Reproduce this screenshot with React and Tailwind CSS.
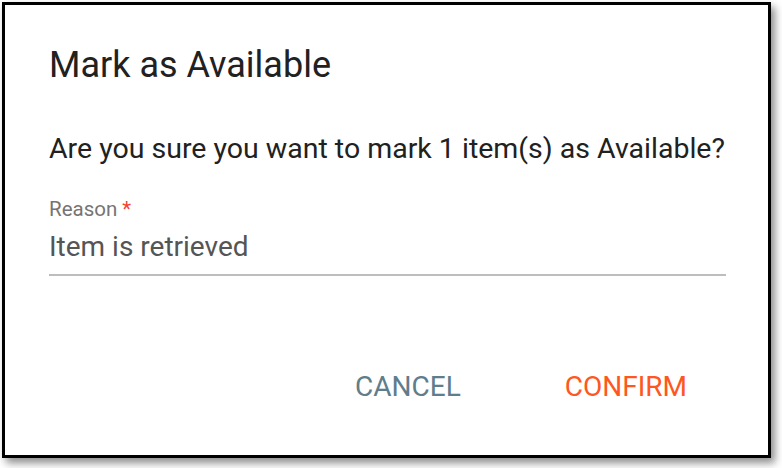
import React from 'react';

export default function App() {
  return (
    <div className="w-[782px] h-[468px] bg-white pl-[2px] pt-[2px] font-['Roboto',sans-serif]">
      <div className="w-[769px] h-[456px] border-[3px] border-black bg-white shadow-[4px_5px_8px_rgba(0,0,0,0.45)] flex flex-col px-[44px]">
        <h1 className="mt-[36px] text-[36px] leading-[48px] text-[#212121] font-normal">Mark as Available</h1>
        <p className="mt-[42px] whitespace-nowrap text-[28.5px] leading-[36px] text-[#212121]">
          Are you sure you want to mark 1 item(s) as Available?
        </p>
        <div className="mt-[30px] flex flex-col w-[677px]">
          <label className="text-[20.5px] leading-[24px] text-[#757575]">
            Reason <span className="text-[#f44336]">*</span>
          </label>
          <div className="mt-[9px] text-[28px] leading-[34px] text-[#555555] pb-[10px] border-b-2 border-[#bdbdbd]">
            Item is retrieved
          </div>
        </div>
        <div className="mt-auto mb-[50px] flex justify-end pr-[13px]">
          <button className="px-[24px] text-[28px] leading-[36px] uppercase text-[#607d8b]">Cancel</button>
          <button className="ml-[56px] px-[24px] text-[28px] leading-[36px] uppercase text-[#ff5722]">Confirm</button>
        </div>
      </div>
    </div>
  );
}
